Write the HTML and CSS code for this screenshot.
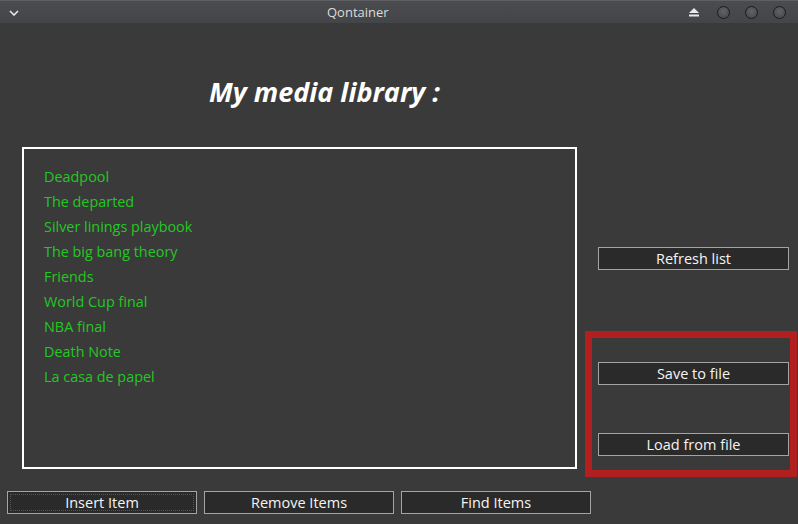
FILE: index.html
```html
<!DOCTYPE html>
<html>
<head>
<meta charset="utf-8">
<title>Qontainer</title>
<link rel="stylesheet" href="styles.css">
</head>
<body>
<div class="window">
  <div class="titlebar">
    <svg class="chevron" width="10" height="6" viewBox="0 0 10 6"><path d="M1 1 L5 5 L9 1" fill="none" stroke="#e8e8e8" stroke-width="1.6"/></svg>
    <div class="title">Qontainer</div>
    <div class="controls">
      <svg class="eject" width="10" height="9" viewBox="0 0 10 9"><path d="M5 0 L10 5 L0 5 Z" fill="#e8e8e8"/><rect x="0" y="6.5" width="10" height="2" fill="#e8e8e8"/></svg>
      <span class="dot"></span>
      <span class="dot"></span>
      <span class="dot"></span>
    </div>
  </div>
  <div class="main">
    <div class="left">
      <h1 class="heading">My media library :</h1>
      <div class="list">
        <div class="item">Deadpool</div>
        <div class="item">The departed</div>
        <div class="item">Silver linings playbook</div>
        <div class="item">The big bang theory</div>
        <div class="item">Friends</div>
        <div class="item">World Cup final</div>
        <div class="item">NBA final</div>
        <div class="item">Death Note</div>
        <div class="item">La casa de papel</div>
      </div>
    </div>
    <div class="right">
      <button class="btn refresh">Refresh list</button>
      <div class="highlight">
        <button class="btn">Save to file</button>
        <button class="btn load">Load from file</button>
      </div>
    </div>
  </div>
  <div class="bottom">
    <button class="btn wide focus"><span class="focus-ring">Insert Item</span></button>
    <button class="btn wide">Remove Items</button>
    <button class="btn wide">Find Items</button>
  </div>
</div>
</body>
</html>
```
FILE: styles.css
```css
* { box-sizing: border-box; }
html, body { margin: 0; padding: 0; }
body {
  width: 798px;
  height: 524px;
  overflow: hidden;
  background: #3a3a3a;
  font-family: "Open Sans", "Noto Sans", sans-serif;
  color: #f0f0f0;
}
.window {
  width: 798px;
  height: 524px;
  display: flex;
  flex-direction: column;
  background: #3a3a3a;
}
.titlebar {
  height: 23px;
  flex: none;
  display: flex;
  align-items: center;
  background: linear-gradient(#4a4c4f, #434548);
  border-top: 1px solid #5e6064;
}
.chevron { margin-left: 9px; margin-top: 1px; }
.title {
  margin-left: 308px;
  font-size: 13px;
  color: #dcdcdc;
}
.controls {
  margin-left: auto;
  margin-right: 12px;
  display: flex;
  align-items: center;
  gap: 15px;
}
.eject { margin-right: 3px; }
.dot {
  width: 13px;
  height: 13px;
  border-radius: 50%;
  background: radial-gradient(circle at 50% 40%, #606265, #444548);
  border: 1.5px solid #1a1b1c;
  display: block;
}
.main {
  display: flex;
  align-items: flex-start;
  height: 454px;
  flex: none;
}
.left {
  margin-left: 22px;
  width: 555px;
}
.heading {
  margin: 0;
  padding-top: 51px;
  padding-left: 187px;
  height: 124px;
  font-size: 27px;
  line-height: 36px;
  font-style: italic;
  font-weight: 700;
  color: #ffffff;
}
.list {
  height: 322px;
  border: 2px solid #ffffff;
  padding: 15px 0 0 20px;
}
.item {
  height: 25px;
  line-height: 25px;
  font-size: 14.4px;
  color: #22c822;
}
.right {
  margin-left: 8px;
  width: 212px;
  display: flex;
  flex-direction: column;
}
.btn {
  width: 191px;
  height: 23px;
  background: #2a2a2a;
  border: 1px solid #a4a4a4;
  color: #f4f4f4;
  font-family: "Open Sans", "Noto Sans", sans-serif;
  font-size: 14.5px;
  padding: 0;
  margin: 0;
  line-height: 20px;
  display: block;
}
.refresh {
  margin-top: 224px;
  margin-left: 13px;
}
.highlight {
  margin-top: 61px;
  height: 146px;
  border: 7px solid #b21f1f;
  padding: 24px 1px 0 6px;
  display: flex;
  flex-direction: column;
}
.load { margin-top: 48px; }
.bottom {
  margin-top: 14px;
  padding-left: 7px;
  display: flex;
  gap: 7px;
}
.wide { width: 190px; }
.focus { padding: 2px; }
.focus-ring {
  display: block;
  height: 17px;
  line-height: 16px;
  border: 1px dotted #555;
}
```
